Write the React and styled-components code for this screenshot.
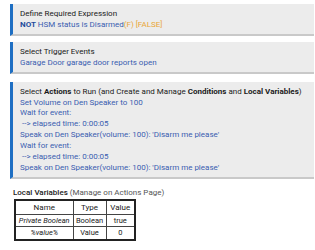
import React from "react";
import styled, { createGlobalStyle } from "styled-components";

const Global = createGlobalStyle`
  html, body { margin: 0; padding: 0; background: #fff; }
  body { font-family: Roboto, "Liberation Sans", Arial, sans-serif; }
`;

const Page = styled.div`
  width: 315px;
  height: 250px;
  padding: 4px 1px 0 10px;
  box-sizing: border-box;
  display: flex;
  flex-direction: column;
  align-items: stretch;
  overflow: hidden;
`;

const Card = styled.div`
  background: #ececec;
  border-left: 3px solid #1e6fc3;
  border-bottom: 2px solid #c9c9c9;
  padding: 5px 8px 3px 7px;
  margin-bottom: ${(p) => p.$gap}px;
  font-size: 8px;
  line-height: 10.9px;
  color: #1a1a1a;
`;

const Title = styled.div`
  color: #1a1a1a;
  white-space: nowrap;
  b { font-weight: 700; }
`;

const Line = styled.div`
  color: #3a5db0;
  white-space: nowrap;
`;

const Strong = styled.span`
  font-weight: 700;
  color: #1f4c9c;
`;

const Muted = styled.span`
  color: #eaa638;
`;

const VarLabel = styled.div`
  margin: 8px 0 0 3px;
  font-size: 8px;
  line-height: 11px;
  color: #555;
  b { font-weight: 500; color: #1a1a1a; }
`;

const Table = styled.table`
  align-self: flex-start;
  margin: 1px 0 0 4px;
  border-collapse: collapse;
  border: 2px solid #222;
  color: #1a1a1a;
  table-layout: fixed;
`;

const Col = styled.col`
  width: ${(p) => p.$w}px;
`;

const Cell = styled.td`
  border: 1px solid #444;
  padding: 0 2px;
  text-align: center;
  white-space: nowrap;
  font-size: ${(p) => (p.$head ? "8px" : "7.5px")};
  line-height: ${(p) => (p.$head ? "13px" : "11.5px")};
  font-style: ${(p) => (p.$italic ? "italic" : "normal")};
`;

export default function App() {
  return (
    <>
      <Global />
      <Page>
        <Card $gap={6}>
          <Title>Define Required Expression</Title>
          <Line>
            <Strong>NOT</Strong> HSM status is Disarmed<Muted>(F) [FALSE]</Muted>
          </Line>
        </Card>
        <Card $gap={8}>
          <Title>Select Trigger Events</Title>
          <Line>Garage Door garage door reports open</Line>
        </Card>
        <Card $gap={0}>
          <Title>
            Select <b>Actions</b> to Run (and Create and Manage <b>Conditions</b> and <b>Local Variables</b>)
          </Title>
          <Line>Set Volume on Den Speaker to 100</Line>
          <Line>Wait for event:</Line>
          <Line>&nbsp;--&gt; elapsed time: 0:00:05</Line>
          <Line>Speak on Den Speaker(volume: 100): 'Disarm me please'</Line>
          <Line>Wait for event:</Line>
          <Line>&nbsp;--&gt; elapsed time: 0:00:05</Line>
          <Line>Speak on Den Speaker(volume: 100): 'Disarm me please'</Line>
        </Card>
        <VarLabel>
          <b>Local Variables</b> (Manage on Actions Page)
        </VarLabel>
        <Table>
          <colgroup>
            <Col $w={58} />
            <Col $w={33} />
            <Col $w={29} />
          </colgroup>
          <tbody>
            <tr>
              <Cell $head>Name</Cell>
              <Cell $head>Type</Cell>
              <Cell $head>Value</Cell>
            </tr>
            <tr>
              <Cell $italic>Private Boolean</Cell>
              <Cell>Boolean</Cell>
              <Cell>true</Cell>
            </tr>
            <tr>
              <Cell $italic>%value%</Cell>
              <Cell>Value</Cell>
              <Cell>0</Cell>
            </tr>
          </tbody>
        </Table>
      </Page>
    </>
  );
}
